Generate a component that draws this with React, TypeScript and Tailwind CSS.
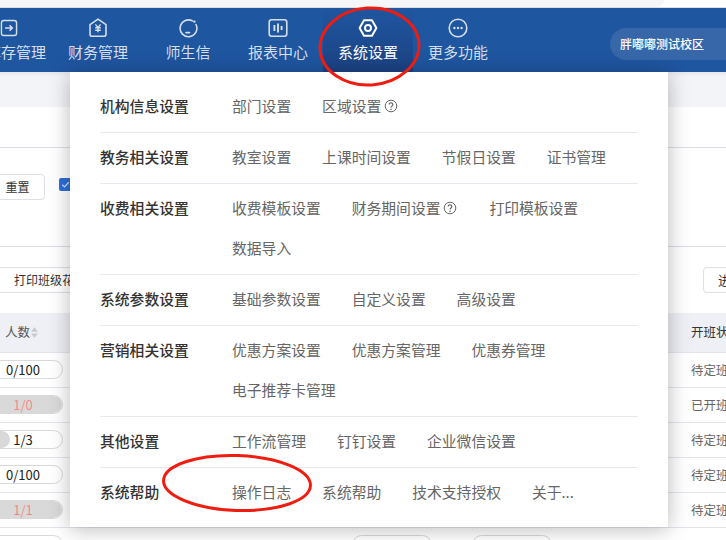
import type { ReactNode } from "react";

const font = { fontFamily: '"Noto Sans CJK SC", "Noto Sans", sans-serif' };

const navItems: { label: string; icon: ReactNode; active?: boolean }[] = [
  {
    label: "财务管理",
    icon: (
      <>
        <path d="M10 1.2 18 6.6v9.6a2 2 0 0 1-2 2H4a2 2 0 0 1-2-2V6.6z" strokeLinejoin="round" />
        <path d="M7.4 6.4 10 9.4l2.6-3M7.2 9.8h5.6M7.2 12.2h5.6M10 9.4v4.8" strokeWidth="1.4" />
      </>
    ),
  },
  {
    label: "师生信",
    icon: (
      <>
        <path d="M14.5 2.9A8.4 8.4 0 1 0 18 6.5" strokeLinecap="round" />
        <path d="M8 14.6h3.5" strokeLinecap="round" />
        <circle cx="16.4" cy="3.6" r="1.2" fill="currentColor" stroke="none" />
      </>
    ),
  },
  {
    label: "报表中心",
    icon: (
      <>
        <rect x="1.2" y="1.8" width="17.6" height="16.4" rx="2.4" />
        <path d="M6.4 7v6M10 5.4v9.2M13.6 8v4" strokeWidth="1.9" />
      </>
    ),
  },
  {
    label: "系统设置",
    active: true,
    icon: (
      <>
        <path d="M6 2.2h8l4.4 7.8-4.4 7.8H6L1.6 10z" strokeLinejoin="round" strokeWidth="2" />
        <circle cx="10" cy="10" r="3" strokeWidth="2" />
      </>
    ),
  },
  {
    label: "更多功能",
    icon: (
      <>
        <circle cx="10" cy="10" r="8.8" />
        <circle cx="6.4" cy="10" r="1.2" fill="currentColor" stroke="none" />
        <circle cx="10" cy="10" r="1.2" fill="currentColor" stroke="none" />
        <circle cx="13.6" cy="10" r="1.2" fill="currentColor" stroke="none" />
      </>
    ),
  },
];

const menuGroups: { title: string; items: { label: string; help?: boolean }[] }[] = [
  { title: "机构信息设置", items: [{ label: "部门设置" }, { label: "区域设置", help: true }] },
  {
    title: "教务相关设置",
    items: [{ label: "教室设置" }, { label: "上课时间设置" }, { label: "节假日设置" }, { label: "证书管理" }],
  },
  {
    title: "收费相关设置",
    items: [
      { label: "收费模板设置" },
      { label: "财务期间设置", help: true },
      { label: "打印模板设置" },
      { label: "数据导入" },
    ],
  },
  { title: "系统参数设置", items: [{ label: "基础参数设置" }, { label: "自定义设置" }, { label: "高级设置" }] },
  {
    title: "营销相关设置",
    items: [
      { label: "优惠方案设置" },
      { label: "优惠方案管理" },
      { label: "优惠券管理" },
      { label: "电子推荐卡管理" },
    ],
  },
  { title: "其他设置", items: [{ label: "工作流管理" }, { label: "钉钉设置" }, { label: "企业微信设置" }] },
  { title: "系统帮助", items: [{ label: "操作日志" }, { label: "系统帮助" }, { label: "技术支持授权" }, { label: "关于..." }] },
];

const rows = [
  { count: "0/100", fill: 0, status: "待定班" },
  { count: "1/0", fill: 100, status: "已开班", over: true },
  { count: "1/3", fill: 33, status: "待定班" },
  { count: "0/100", fill: 0, status: "待定班" },
  { count: "1/1", fill: 100, status: "待定班", over: true },
];

function HelpIcon() {
  return (
    <svg viewBox="0 0 14 14" className="mr-[1px] ml-[3px] h-[14px] w-[14px] shrink-0 text-[#666]" fill="none" stroke="currentColor">
      <circle cx="7" cy="7" r="5.8" />
      <path d="M5.2 5.6a1.8 1.8 0 1 1 2.8 1.5c-.6.4-1 .7-1 1.5" strokeWidth="1.2" />
      <circle cx="7" cy="10.2" r=".8" fill="currentColor" stroke="none" />
    </svg>
  );
}

function CountPill({ count, fill, over }: { count: string; fill: number; over?: boolean }) {
  return (
    <div className="relative mt-[-2px] ml-[-17px] h-[19px] w-[80px] shrink-0 overflow-hidden rounded-full border border-[#d9d9d9] bg-white">
      <div className="absolute inset-y-0 left-0 rounded-full bg-[#d9d9d9]" style={{ width: `${fill}%` }} />
      <div className={`relative text-center text-[13px] leading-[17px] ${over ? "text-[#f78989]" : "text-[#222]"}`}>{count}</div>
    </div>
  );
}

function TopNav() {
  return (
    <div className="flex h-[64px] bg-[#1f56a0]">
      <div className="ml-[-29px] flex w-[90px] shrink-0 flex-col items-center pt-[11px] text-[#d5deeb]">
        <svg viewBox="0 0 20 20" className="mr-[14px] h-[18px] w-[18px]" fill="none" stroke="currentColor" strokeWidth="1.6">
          <rect x="1.6" y="1.6" width="16.8" height="16.8" rx="2.6" />
          <path d="M5.6 10h8M10.6 7l3 3-3 3" strokeWidth="1.8" />
        </svg>
        <span className="mt-[4px] text-[15px] leading-[22px]">库存管理</span>
      </div>
      <div className="ml-[-8px] flex">
        {navItems.map((item) => (
          <div
            key={item.label}
            className={`flex w-[90px] flex-col items-center pt-[10px] ${
              item.active ? "bg-gradient-to-b from-[#1f56a0] to-[#1c4283] text-white" : "text-[#d5deeb]"
            }`}
          >
            <svg viewBox="0 0 20 20" className="h-[20px] w-[20px]" fill="none" stroke="currentColor" strokeWidth="1.6">
              {item.icon}
            </svg>
            <span className="mt-[3px] text-[15px] leading-[22px]">{item.label}</span>
          </div>
        ))}
      </div>
      <div className="mt-[20px] ml-auto flex h-[32px] w-[116px] shrink-0 items-center rounded-l-full bg-[#3767a9] pl-[10px] text-[12px] font-medium text-white">
        胖嘟嘟测试校区
      </div>
    </div>
  );
}

function PageBehind() {
  return (
    <div>
      <div className="mr-[62px] h-[7px] rounded-br-[12px] bg-[#f6f6f8]" />
      <div className="h-px bg-[#dcdde2]" />
      <TopNav />
      <div className="h-[35px] bg-[linear-gradient(#e6e7ec_0,#f3f4f8_5px)]" />
      <div className="h-[41px] border-b border-[#dcdce4]" />
      <div className="flex h-[99px] border-b border-[#dcdce4] pt-[26px]">
        <div className="ml-[-10px] flex h-[26px] w-[55px] items-center justify-center rounded-[4px] border border-[#dcdfe6] text-[12px] text-[#333]">
          重置
        </div>
        <div className="mt-[4px] ml-[14px] flex h-[13px] w-[13px] items-center justify-center rounded-[2px] bg-[#2b6fd8]">
          <svg viewBox="0 0 12 12" className="h-[11px] w-[11px]" fill="none" stroke="#cfe0fa" strokeWidth="1.4">
            <path d="M2.5 6.2 5 8.6l4.5-5" />
          </svg>
        </div>
      </div>
      <div className="flex h-[66px] items-start justify-between pt-[20px]">
        <div className="ml-[-10px] flex h-[26px] w-[120px] items-center overflow-hidden rounded-[4px] border border-[#dcdfe6] pl-[23px] text-[12px] whitespace-nowrap text-[#333]">
          打印班级花名册
        </div>
        <div className="mr-[-10px] flex h-[26px] w-[33px] items-center rounded-[4px] border border-[#dcdfe6] pl-[14px] text-[13px] whitespace-nowrap text-[#333]">
          进
        </div>
      </div>
      <div className="flex h-[40px] items-center justify-between border-b border-[#e4e4ec] bg-[#eef0f5] text-[12.5px] text-[#555]">
        <div className="flex items-center pl-[5px]">
          人数
          <svg viewBox="0 0 8 12" className="ml-[1px] h-[11px] w-[7px] text-[#c8c9cc]" fill="currentColor">
            <path d="M4 0 8 5H0zM4 12 0 7h8z" />
          </svg>
        </div>
        <div className="w-[35px] overflow-hidden whitespace-nowrap text-[#333]">开班状态</div>
      </div>
      {rows.map((row, i) => (
        <div key={i} className="flex h-[35px] items-center justify-between border-b border-[#e4e4ec] text-[12.5px] text-[#666]">
          <CountPill count={row.count} fill={row.fill} over={row.over} />
          <div className="w-[35px] overflow-hidden whitespace-nowrap">{row.status}</div>
        </div>
      ))}
      <div className="flex pt-[9px]">
        <CountPill count="0/100" fill={0} />
        <div className="ml-[306px]">
          <CountPill count="0/100" fill={0} />
        </div>
        <div className="ml-[57px]">
          <CountPill count="0/14" fill={0} />
        </div>
      </div>
    </div>
  );
}

function SettingsMenu() {
  return (
    <div className="absolute top-[72px] left-[70px] w-[598px] bg-white px-[30px] pt-[10px] pb-[9px] shadow-[0_2px_20px_rgba(0,0,0,0.28)]">
      {menuGroups.map((group, i) => (
        <div key={group.title} className={`flex pt-[4px] pb-[6px] ${i > 0 ? "border-t border-[#e8e8ee]" : ""}`}>
          <div className="w-[132px] shrink-0 text-[14.8px] leading-[40px] font-medium text-[#333]">{group.title}</div>
          <div className="flex flex-wrap gap-x-[30.9px]">
            {group.items.map((item) => (
              <div key={item.label} className="flex items-center text-[14.8px] leading-[40px] text-[#666]">
                {item.label}
                {item.help && <HelpIcon />}
              </div>
            ))}
          </div>
        </div>
      ))}
    </div>
  );
}

function RedCircles() {
  return (
    <svg className="pointer-events-none absolute inset-0 h-[540px] w-[726px]" fill="none" stroke="#f01c10" strokeWidth="3">
      <ellipse cx="369.5" cy="46.5" rx="49.5" ry="38.5" transform="rotate(-4 369.5 46.5)" />
      <ellipse cx="237" cy="483" rx="73.5" ry="27.5" transform="rotate(2 237 483)" />
    </svg>
  );
}

export default function App() {
  return (
    <div className="relative h-[540px] w-[726px] overflow-hidden bg-white" style={font}>
      <PageBehind />
      <SettingsMenu />
      <RedCircles />
    </div>
  );
}
